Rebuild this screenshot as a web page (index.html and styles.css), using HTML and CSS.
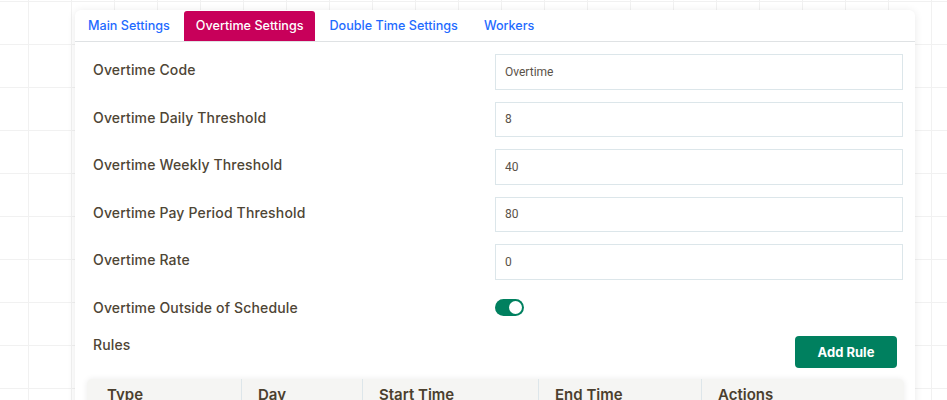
FILE: index.html
```html
<!DOCTYPE html>
<html lang="en">
<head>
<meta charset="utf-8">
<title>Overtime Settings</title>
<link rel="stylesheet" href="styles.css">
</head>
<body>
<div class="page">
  <div class="card">
    <nav class="tabs">
      <a class="tab">Main Settings</a>
      <a class="tab active">Overtime Settings</a>
      <a class="tab">Double Time Settings</a>
      <a class="tab">Workers</a>
    </nav>
    <div class="body">
      <div class="form">
        <label class="label">Overtime Code</label>
        <input class="input" type="text" value="Overtime">
        <label class="label">Overtime Daily Threshold</label>
        <input class="input" type="text" value="8">
        <label class="label">Overtime Weekly Threshold</label>
        <input class="input" type="text" value="40">
        <label class="label">Overtime Pay Period Threshold</label>
        <input class="input" type="text" value="80">
        <label class="label">Overtime Rate</label>
        <input class="input" type="text" value="0">
        <label class="label switch-label">Overtime Outside of Schedule</label>
        <div class="switch-cell"><span class="switch"><span class="knob"></span></span></div>
      </div>
      <div class="rules-row">
        <span class="rules-title">Rules</span>
        <button class="btn">Add Rule</button>
      </div>
      <div class="table">
        <div class="th c1">Type</div>
        <div class="th c2">Day</div>
        <div class="th c3">Start Time</div>
        <div class="th c4">End Time</div>
        <div class="th c5">Actions</div>
      </div>
    </div>
  </div>
</div>
</body>
</html>
```
FILE: styles.css
```css
html, body {
  margin: 0;
  padding: 0;
}
body {
  background-color: #ffffff;
  background-image:
    linear-gradient(to right, #f1f1f1 1px, transparent 1px),
    linear-gradient(to bottom, #f1f1f1 1px, transparent 1px);
  background-size: 43px 43px;
  background-position: 28px 1px;
  font-family: Inter, "Open Sans", sans-serif;
  height: 400px;
  overflow: hidden;
}
.page {
  padding: 10px 0 0 75px;
}
.card {
  width: 840px;
  background: #fff;
  border-radius: 6px;
  box-shadow: 0 1px 8px rgba(0, 0, 0, 0.09);
  height: 420px;
}
.tabs {
  display: flex;
  gap: 2px;
  padding: 1px 0 0 1px;
  border-bottom: 1px solid #dfe2e4;
}
.tab {
  display: block;
  height: 30px;
  line-height: 30px;
  padding: 0 12px;
  font-size: 12.6px;
  font-weight: 500;
  color: #1f6bff;
  border-radius: 3px 3px 0 0;
  white-space: nowrap;
}
.tab.active {
  background: #c8005a;
  color: #fff;
}
.body {
  padding: 12px 12px 0 12px;
}
.form {
  display: grid;
  grid-template-columns: 1fr 408px;
  row-gap: 12px;
}
.label {
  padding: 5px 0 0 6px;
  font-size: 14px;
  line-height: 21px;
  font-weight: 500;
  letter-spacing: 0.15px;
  color: #4e4535;
}
.input {
  box-sizing: border-box;
  height: 35.5px;
  margin: 0;
  border: 1px solid #dce6ea;
  border-radius: 0;
  padding: 0 9px;
  font-family: Roboto, sans-serif;
  font-size: 12px;
  color: #5a5248;
  outline: none;
}
.switch-label {
  padding-top: 5px;
}
.switch-cell {
  height: 32px;
  display: flex;
  align-items: center;
}
.switch {
  width: 29px;
  height: 17px;
  border-radius: 9px;
  background: #00805f;
  display: flex;
  align-items: center;
  justify-content: flex-end;
  padding-right: 2px;
  box-sizing: border-box;
}
.knob {
  width: 13px;
  height: 13px;
  border-radius: 50%;
  background: #fff;
}
.rules-row {
  display: flex;
  justify-content: space-between;
  align-items: flex-start;
  padding: 12.5px 6px 0 6px;
}
.rules-title {
  margin-top: -2px;
  font-size: 14px;
  line-height: 21px;
  font-weight: 500;
  letter-spacing: 0.15px;
  color: #4e4535;
}
.btn {
  width: 102px;
  height: 31.5px;
  border: 0;
  border-radius: 4px;
  background: #00805f;
  color: #fff;
  font-family: Inter, sans-serif;
  font-size: 13px;
  font-weight: 700;
  margin-right: 0;
}
.table {
  margin-top: 11px;
  display: grid;
  grid-template-columns: 155px 121px 176px 163px 1fr;
  background: #f5f5f3;
  border-radius: 5px 5px 0 0;
  box-shadow: 0 0 6px rgba(0, 0, 0, 0.08);
  margin-right: -1px;
}
.th {
  height: 44px;
  padding: 6px 0 0 20px;
  box-sizing: border-box;
  font-size: 15px;
  font-weight: 600;
  color: #4b3f2e;
  border-right: 1px solid #dde6ea;
}
.th.c2, .th.c3, .th.c4, .th.c5 {
  padding-left: 16px;
}
.th.c5 {
  border-right: 0;
}
```
